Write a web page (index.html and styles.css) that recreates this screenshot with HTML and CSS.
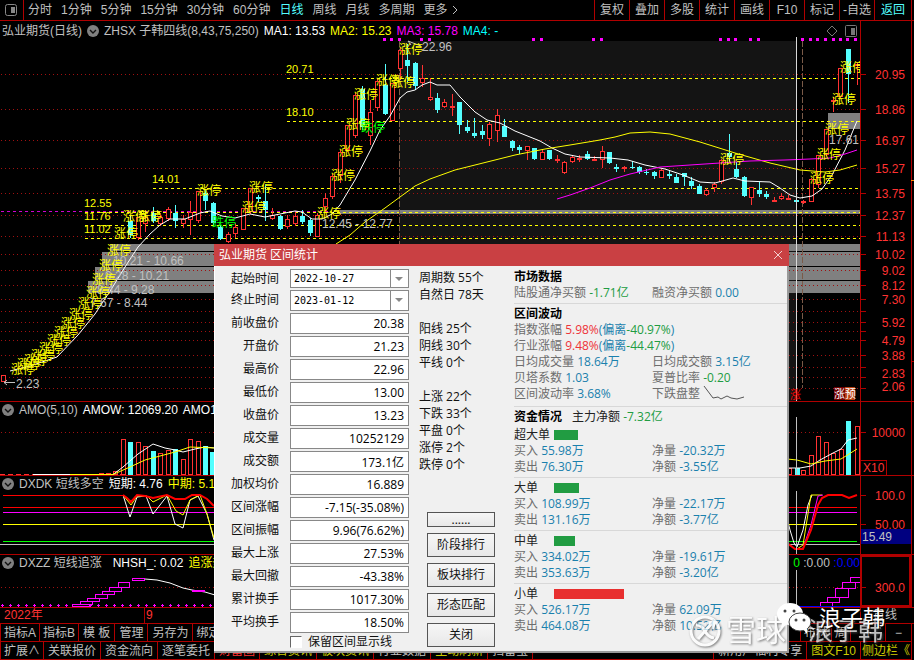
FILE: index.html
```
<!DOCTYPE html>
<html lang="zh-CN">
<head>
<meta charset="UTF-8" />
<title>弘业期货 区间统计</title>
<link rel="stylesheet" href="styles.css">
</head>
<body>
<!-- 顶部工具栏 -->
<div class="toolbar">
	<button class="layout" aria-label="布局"><svg width="12" height="12" viewBox="0 0 12 12"><rect x="0.5" y="0.5" width="11" height="11" rx="2" fill="none" stroke="#888"/><rect x="6" y="3" width="4" height="6" fill="#888"/></svg></button>
	<div class="periods">
		<button>分时</button>
		<button>1分钟</button>
		<button>5分钟</button>
		<button>15分钟</button>
		<button>30分钟</button>
		<button>60分钟</button>
		<button class="on">日线</button>
		<button>周线</button>
		<button>月线</button>
		<button>多周期</button>
		<button>更多 <svg width="6" height="10" viewBox="0 0 6 10"><path d="M1 1L5 5L1 9" fill="none" stroke="#c0c0c0"/></svg></button>
	</div>
	<div class="tools">
		<button>复权</button>
		<button>叠加</button>
		<button>多股</button>
		<button>统计</button>
		<button>画线</button>
		<button>F10</button>
		<button>标记</button>
		<button>-自选</button>
		<button class="on">返回</button>
	</div>
</div>

<!-- K线 -->
<div class="panel">
	<div class="title main">
		<span>弘业期货(日线)</span>
		<svg class="fold" width="12" height="12" viewBox="0 0 12 12"><circle cx="6" cy="6" r="6" fill="#808080"/><path d="M3 5L6 8L9 5" fill="none" stroke="#111" stroke-width="1.4"/></svg>
		<span>ZHSX 子韩四线(8,43,75,250)</span>
		<span class="white">MA1: 13.53</span>
		<span class="yellow">MA2: 15.23</span>
		<span class="magenta">MA3: 15.78</span>
		<span class="cyan">MA4: -</span>
		<svg class="right" width="31" height="12" viewBox="0 0 31 12"><path d="M6 1L11 6L6 11L1 6Z" fill="none" stroke="#777"/><rect x="19.500" y="0.500" width="11" height="11" rx="1" fill="none" stroke="#777"/><rect x="25" y="3" width="4" height="7" fill="#777"/></svg>
	</div>
	<svg class="plot" id="kline" viewBox="0 21 860 380"></svg>
	<svg class="axis" id="klineAxis" width="54" height="380" viewBox="860 21 54 380"></svg>
</div>
<!-- 成交额 -->
<div class="panel">
	<div class="title">
		<svg class="fold" width="12" height="12" viewBox="0 0 12 12"><circle cx="6" cy="6" r="6" fill="#808080"/><path d="M3 5L6 8L9 5" fill="none" stroke="#111" stroke-width="1.4"/></svg>
		<span>AMO(5,10)</span>
		<span class="white">AMOW: 12069.20</span>
		<span class="white">AMO1:</span>
	</div>
	<svg class="plot" id="amo" viewBox="0 402 860 73"></svg>
	<svg class="axis" id="amoAxis" width="54" height="73" viewBox="860 402 54 73"></svg>
</div>
<!-- 短线多空 -->
<div class="panel">
	<div class="title">
		<svg class="fold" width="12" height="12" viewBox="0 0 12 12"><circle cx="6" cy="6" r="6" fill="#808080"/><path d="M3 5L6 8L9 5" fill="none" stroke="#111" stroke-width="1.4"/></svg>
		<span>DXDK 短线多空</span>
		<span class="white">短期: 4.76</span>
		<span class="yellow">中期: 5.15</span>
	</div>
	<svg class="plot" id="dxdk" viewBox="0 476 860 78"></svg>
	<svg class="axis" id="dxdkAxis" width="54" height="78" viewBox="860 476 54 78"></svg>
</div>
<!-- 短线追涨 -->
<div class="panel">
	<div class="title">
		<svg class="fold" width="12" height="12" viewBox="0 0 12 12"><circle cx="6" cy="6" r="6" fill="#808080"/><path d="M3 5L6 8L9 5" fill="none" stroke="#111" stroke-width="1.4"/></svg>
		<span>DXZZ 短线追涨</span>
		<span class="white wide">NHSH_: 0.02</span>
		<span class="yellow">追涨热</span>
		<span class="tail"><span class="green">0</span> <span>:0.00</span> <span class="blue">:0.00</span></span>
	</div>
	<svg class="plot" id="dxzz" viewBox="0 555 860 52"></svg>
	<svg class="axis" id="dxzzAxis" width="54" height="52" viewBox="860 555 54 52"></svg>
</div>

<div class="dates">
	<span class="year">2022年</span>
	<span class="month">9</span>
	<span class="unit">日线</span>
</div>
<div class="tabs">
	<button>指标A</button>
	<button>指标B</button>
	<button class="roomy">模 板</button>
	<button class="roomy">管理</button>
	<button class="roomy">另存为</button>
	<button>绑定到</button>
	<button class="push">布林</button>
	<button>周</button>
	<button class="sq">+</button>
	<button class="last">−</button>
</div>
<div class="tabs second">
	<button>扩展∧</button>
	<button>关联报价</button>
	<button>资金流向</button>
	<button>逐笔委托</button>
	<button class="red">财富圈</button>
	<button class="yellow2">综合资讯</button>
	<button class="yellow2">板块资讯</button>
	<button>行业数据</button>
	<button class="yellow2">主动刷新</button>
	<button>扫雷宝</button>
	<button class="push">新用户福利专享</button>
	<button class="yellow2">图文F10</button>
	<button class="yellow2 last">侧边栏《</button>
</div>

<!-- 区间统计 -->
<div class="dialog" role="dialog" aria-label="弘业期货 区间统计">
	<div class="caption">
		<span>弘业期货 区间统计</span>
		<button aria-label="关闭窗口"><svg width="10" height="10" viewBox="0 0 10 10"><path d="M1 1L9 9M9 1L1 9" stroke="#f3d0d0" fill="none"/></svg></button>
	</div>
	<div class="content">
		<form class="fields">
			<label for="f1">起始时间</label><span class="date first"><select id="f1"><option>2022-10-27</option></select></span>
			<label for="f2">终止时间</label><span class="date"><select id="f2"><option>2023-01-12</option></select></span>
			<label for="f3">前收盘价</label><input id="f3" value="20.38" readonly>
			<label for="f4">开盘价</label><input id="f4" value="21.23" readonly>
			<label for="f5">最高价</label><input id="f5" value="22.96" readonly>
			<label for="f6">最低价</label><input id="f6" value="13.00" readonly>
			<label for="f7">收盘价</label><input id="f7" value="13.23" readonly>
			<label for="f8">成交量</label><input id="f8" value="10252129" readonly>
			<label for="f9">成交额</label><input id="f9" value="173.1亿" readonly>
			<label for="f10">加权均价</label><input id="f10" value="16.889" readonly>
			<label for="f11">区间涨幅</label><input id="f11" value="-7.15(-35.08%)" readonly>
			<label for="f12">区间振幅</label><input id="f12" value="9.96(76.62%)" readonly>
			<label for="f13">最大上涨</label><input id="f13" value="27.53%" readonly>
			<label for="f14">最大回撤</label><input id="f14" value="-43.38%" readonly>
			<label for="f15">累计换手</label><input id="f15" value="1017.30%" readonly>
			<label for="f16">平均换手</label><input id="f16" value="18.50%" readonly>
			<span class="keep"><input type="checkbox" id="keep"><label for="keep">保留区间显示线</label></span>
		</form>
		<div class="middle">
			<div class="counts">
				<p>周期数 55个</p>
				<p>自然日 78天</p>
				<p class="group">阳线 25个</p>
				<p>阴线 30个</p>
				<p>平线 0个</p>
				<p class="group">上涨 22个</p>
				<p>下跌 33个</p>
				<p>平盘 0个</p>
				<p>涨停 2个</p>
				<p>跌停 0个</p>
			</div>
			<div class="actions">
				<button class="more">......</button>
				<button>阶段排行</button>
				<button>板块排行</button>
				<button>形态匹配</button>
				<button>关闭</button>
			</div>
		</div>
		<div class="stats">
			<section>
				<h2>市场数据</h2>
				<div class="pair"><p>陆股通净买额 <b class="dn">-1.71亿</b></p><p>融资净买额 <b>0.00</b></p></div>
			</section>
			<section class="wave">
				<h2>区间波动</h2>
				<p>指数涨幅 <b class="up">5.98%</b><b>(偏离</b><b class="dn">-40.97%</b><b>)</b></p>
				<p>行业涨幅 <b class="up">9.48%</b><b>(偏离</b><b class="dn">-44.47%</b><b>)</b></p>
				<div class="pair"><p>日均成交量 <b>18.64万</b></p><p>日均成交额 <b>3.15亿</b></p></div>
				<div class="pair"><p>贝塔系数 <b>1.03</b></p><p>夏普比率 <b class="dn">-0.20</b></p></div>
				<div class="pair"><p>区间波动率 <b>3.68%</b></p><p>下跌盘整 <svg width="42" height="14" viewBox="0 0 42 14"><path d="M1 0L10 12L15 11L18 13L24 10L28 12L34 13L41 11" fill="none" stroke="#555"/></svg></p></div>
			</section>
			<section>
				<h2 class="money">资金情况 <span>主力净额 <b class="dn">-7.32亿</b></span></h2>
				<div class="order"><span>超大单</span><i class="sell" style="width:24px"></i></div>
				<div class="pair"><p>买入 <b>55.98万</b></p><p>净量 <b>-20.32万</b></p></div>
				<div class="pair"><p>卖出 <b>76.30万</b></p><p>净额 <b>-3.55亿</b></p></div>
			</section>
			<section>
				<div class="order"><span>大单</span><i class="sell" style="width:25px"></i></div>
				<div class="pair"><p>买入 <b>108.99万</b></p><p>净量 <b>-22.17万</b></p></div>
				<div class="pair"><p>卖出 <b>131.16万</b></p><p>净额 <b>-3.77亿</b></p></div>
			</section>
			<section>
				<div class="order"><span>中单</span><i class="sell" style="width:21px"></i></div>
				<div class="pair"><p>买入 <b>334.02万</b></p><p>净量 <b>-19.61万</b></p></div>
				<div class="pair"><p>卖出 <b>353.63万</b></p><p>净额 <b>-3.20亿</b></p></div>
			</section>
			<section>
				<div class="order"><span>小单</span><i class="buy" style="width:70px"></i></div>
				<div class="pair"><p>买入 <b>526.17万</b></p><p>净量 <b>62.09万</b></p></div>
				<div class="pair"><p>卖出 <b>464.08万</b></p><p>净额 <b>10.52亿</b></p></div>
			</section>
		</div>
	</div>
</div>

<!-- 水印 -->
<div class="mark xueqiu">
	<svg width="34" height="34" viewBox="0 0 34 34"><circle cx="17" cy="17" r="14" fill="none" stroke="#fff" stroke-width="3"/><path d="M8 11Q14 11 17 17T26 24M25 8L10 25M19 9L26 8L25 15" fill="none" stroke="#fff" stroke-width="3"/></svg>
	<span>雪球</span>
	<span class="name">浪子韩</span>
</div>
<div class="mark wechat">
	<svg width="36" height="32" viewBox="0 0 36 32"><ellipse cx="13" cy="11" rx="13" ry="11" fill="#fff"/><path d="M5 19L4 25L11 21Z" fill="#fff"/><circle cx="8" cy="8" r="1.500" fill="#444"/><circle cx="17" cy="8" r="1.500" fill="#444"/><ellipse cx="23" cy="19" rx="11" ry="9" fill="#fff" stroke="#444"/><path d="M26 26L30 31L30 25Z" fill="#fff"/><circle cx="19" cy="17" r="1.500" fill="#444"/><circle cx="27" cy="17" r="1.500" fill="#444"/></svg>
	<span>浪子韩</span>
</div>
<script src="chart.js"></script>
</body>
</html>
```
FILE: styles.css
```
* {
	padding: 0;
	margin: 0;
	box-sizing: border-box;
}
body {
	font: 12px/16px "Liberation Sans", "Noto Sans CJK SC", sans-serif;
	color: #c0c0c0;
	background-color: #000;
	min-height: 100vh;
	position: relative;
	overflow-x: hidden;
}
button {
	font: inherit;
	color: inherit;
	background: none;
	border: 0;
	white-space: nowrap;
}
svg {
	display: block;
}
.white { color: #fff; }
.yellow { color: #ff0; }
.magenta { color: #f0f; }
.cyan { color: #0ff; }
.green { color: #0f0; }
.blue { color: #00f; }
.red { color: #f33; }
.yellow2 { color: #cc0; }

/* 工具栏 */
.toolbar {
	display: flex;
	height: 21px;
	border-bottom: 1px solid #b00000;
}
.toolbar .on {
	color: #54ffff;
}
.layout {
	width: 24px;
	padding-left: 5px;
	border-right: 1px solid #b00000;
}
.periods {
	display: flex;
	gap: 9px;
	padding-left: 4px;
}
.periods button {
	display: flex;
	align-items: center;
	gap: 4px;
}
.tools {
	display: flex;
	margin-left: auto;
	margin-right: 2px;
	border-right: 1px solid #b00000;
}
.tools button {
	width: 35px;
	border-left: 1px solid #b00000;
}
.tools button:last-child {
	width: 37px;
}

/* 图表 */
.panel {
	display: grid;
	grid-template-columns: minmax(0, 1fr) 54px;
	border-bottom: 1px solid #b00000;
}
.title {
	grid-area: 1 / 1;
	align-self: start;
	z-index: 1;
	display: flex;
	align-items: center;
	gap: 5px;
	height: 16px;
	padding-left: 2px;
	overflow: hidden;
	white-space: nowrap;
}
.title.main {
	height: 19px;
}
.title .right {
	margin-left: auto;
	margin-right: 3px;
}
.title .wide {
	margin-left: 6px;
}
.title .tail {
	margin-left: auto;
	word-spacing: normal;
}
.fold {
	flex: none;
}
.plot {
	grid-area: 1 / 1;
	width: 100%;
}
.axis {
	grid-area: 1 / 2;
}
.plot text, .axis text {
	font-size: 12px;
}
.plot .small {
	font-size: 11px;
}
.plot rect, .plot line, .axis rect, .axis line {
	shape-rendering: crispEdges;
}

/* 底部 */
.dates {
	display: flex;
	height: 16px;
	line-height: 15px;
	color: #f33;
	border-bottom: 1px solid #b00000;
}
.dates .year {
	width: 144px;
	padding-left: 4px;
}
.dates .month {
	padding-left: 1px;
	border-left: 1px solid #b00000;
}
.dates .unit {
	margin-left: auto;
	width: 54px;
	padding-left: 12px;
	color: #c0c0c0;
	border-left: 1px solid #b00000;
}
.tabs {
	display: flex;
	height: 18px;
	margin-right: 2px;
	border: 1px solid #b00000;
	border-top: 0;
}
.tabs button {
	padding: 0 3px;
	line-height: 16px;
	border-right: 1px solid #b00000;
}
.tabs .roomy {
	padding: 0 4px;
}
.tabs .push {
	margin-left: auto;
	border-left: 1px solid #b00000;
}
.tabs .sq {
	width: 35px;
}
.tabs .last {
	min-width: 25px;
	padding: 0 1px;
	border-right: 0;
}
.tabs.second button:not(:first-child):not(.last) {
	padding: 0 4px;
}

/* 对话框 */
.dialog {
	position: absolute;
	left: 214px;
	top: 244px;
	width: 575px;
	z-index: 5;
	font-family: "Open Sans", "Noto Sans CJK SC", sans-serif;
	color: #111;
	background-color: #f0f0f0;
	border-bottom: 2px solid #999;
}
.caption {
	display: flex;
	justify-content: space-between;
	align-items: center;
	height: 22px;
	padding: 0 6px 0 5px;
	color: #fff;
	background-color: #c94043;
}
.content {
	display: grid;
	grid-template-columns: 195px 99px 1fr;
	height: 385px;
	border-left: 1px solid #fff;
	border-right: 2px solid #999;
}
.fields {
	display: grid;
	grid-template-columns: 64px 119px;
	column-gap: 11px;
	row-gap: 2px;
	align-content: start;
	padding-top: 3px;
}
.fields > label {
	text-align: right;
	line-height: 19px;
}
.fields > input {
	width: 100%;
	height: 21px;
	padding: 0 4px;
	font: inherit;
	text-align: right;
	background-color: #fff;
	border: 1px solid #888;
}
.date {
	position: relative;
	height: 21px;
}
.date.first {
	height: 19px;
}
.date select {
	display: block;
	width: 100%;
	height: 100%;
	padding-left: 3px;
	font: 10px "DejaVu Sans Mono", monospace;
	color: #000;
	background-color: #fff;
	border: 1px solid #888;
	border-radius: 0;
	appearance: none;
	-webkit-appearance: none;
}
.date:before {
	content: "";
	position: absolute;
	right: 18px;
	top: 1px;
	bottom: 1px;
	border-left: 1px solid #888;
}
.date:after {
	content: "";
	position: absolute;
	right: 6px;
	top: 8px;
	border: 4px solid transparent;
	border-top-color: #888;
	border-bottom: 0;
}
.keep {
	grid-column: 2;
	display: flex;
	align-items: center;
	gap: 6px;
	height: 14px;
	white-space: nowrap;
}
.keep input {
	width: 12px;
	height: 12px;
	background-color: #fff;
	border: 1px solid #fff;
	border-top-color: #666;
	border-left-color: #666;
	appearance: none;
	-webkit-appearance: none;
}
.middle {
	display: flex;
	flex-direction: column;
	justify-content: space-between;
	padding: 3px 14px 4px 9px;
}
.counts {
	line-height: 17px;
	white-space: nowrap;
}
.counts .group {
	margin-top: 17px;
}
.actions {
	display: flex;
	flex-direction: column;
	gap: 6px;
	width: 68px;
	margin-left: 8px;
}
.actions button {
	height: 24px;
	line-height: 20px;
	border: 1px solid #555;
	background: linear-gradient(#f6f6f6, #e8e8e8);
}
.actions .more {
	height: 15px;
	line-height: 12px;
}
.stats {
	color: #6d6d6d;
	white-space: nowrap;
	padding: 1px 0 0 5px;
}
.stats section {
	padding: 2px 0;
	border-bottom: 1px solid #d8d8d8;
}
.stats section:last-child {
	border-bottom: 0;
}
.stats .wave {
	padding-bottom: 4px;
}
.stats h2 {
	font-size: 12px;
	line-height: 16px;
	color: #000;
}
.stats b {
	font-weight: normal;
	color: #1a80ad;
}
.stats .up { color: #ee3338; }
.stats .dn { color: #219c42; }
.stats .money {
	display: flex;
	gap: 10px;
	margin-bottom: 2px;
}
.money span {
	font-weight: normal;
	color: #222;
}
.pair {
	display: grid;
	grid-template-columns: 138px 1fr;
}
.pair svg {
	display: inline-block;
	vertical-align: top;
}
.order {
	display: flex;
	align-items: center;
	color: #222;
}
.order span {
	width: 40px;
}
.order i {
	height: 10px;
}
.sell { background-color: #219c42; }
.buy { background-color: #e83030; }

/* 水印 */
.mark {
	position: absolute;
	z-index: 6;
	display: flex;
	align-items: center;
	color: #fff;
	white-space: nowrap;
	pointer-events: none;
}
.xueqiu {
	left: 688px;
	top: 614px;
	gap: 4px;
	opacity: 0.75;
	font-size: 30px;
	line-height: 34px;
	filter: drop-shadow(1px 1px 1px #555);
}
.xueqiu .name {
	margin-left: 18px;
	font-size: 25px;
}
.wechat {
	left: 777px;
	top: 603px;
	gap: 6px;
	font-size: 22px;
	line-height: 32px;
	text-shadow: 1px 1px 1px #000;
}
```
FILE: chart.js
```
var RED = '#ff3232', CYAN = '#54ffff', LINE = '#b00000';

// 中心x, 最高, 实体上沿, 实体下沿, 最低, 阳线=1 阴线=0
var candles = [
	[3,375,375,382,382,1],[130,215,221,235,238,0],[138,217,217,238,240,1],[145,213,217,224,232,1],
	[153,207,213,221,223,0],[160,215,217,224,226,1],[168,207,209,219,221,1],[175,205,213,221,228,0],
	[183,215,219,224,228,1],[190,201,212,220,235,1],[198,191,191,221,223,1],[205,189,193,201,210,0],
	[213,202,203,223,225,0],[220,225,227,239,240,0],[228,232,234,242,243,1],[235,223,227,234,238,1],
	[243,208,208,230,230,1],[250,188,188,212,214,1],[258,195,197,199,202,0],[265,184,201,210,221,0],
	[272,208,215,219,220,1],[280,215,216,229,230,0],[287,215,219,227,229,1],[295,212,216,224,226,1],
	[302,210,216,222,224,0],[310,218,220,233,236,0],[317,213,215,237,237,1],[325,193,198,207,212,1],
	[332,174,176,197,199,1],[340,150,152,176,183,1],[347,125,125,150,152,1],[355,93,95,136,138,1],
	[362,86,89,127,130,0],[370,100,112,136,145,1],[377,79,81,108,111,1],[385,64,85,114,115,0],
	[392,83,83,121,121,1],[400,48,50,69,80,1],[407,44,60,66,82,0],[415,62,63,86,90,0],
	[422,65,78,83,87,1],[430,78,97,100,101,1],[437,93,98,110,113,0],[444,99,102,107,108,1],
	[452,94,106,107,116,1],[459,102,102,125,134,0],[467,120,127,131,133,0],[474,118,133,136,138,0],
	[482,125,131,135,139,0],[489,122,124,139,146,1],[497,109,115,131,142,1],[504,119,126,137,137,0],
	[512,140,141,148,151,0],[519,145,147,150,154,0],[527,146,146,151,160,1],[534,148,148,159,160,0],
	[542,150,152,160,160,1],[549,150,150,159,160,0],[557,155,159,161,163,1],[564,161,162,173,174,1],
	[572,155,157,162,163,1],[579,155,158,159,162,1],[587,151,154,159,160,0],[594,156,159,160,161,1],
	[602,146,151,160,168,1],[609,152,152,163,164,0],[616,164,167,169,172,0],[624,166,167,169,172,1],
	[632,161,167,168,169,0],[639,166,167,172,174,0],[646,169,172,173,175,0],[654,171,172,176,179,0],
	[661,169,170,178,178,1],[669,171,174,176,179,0],[676,174,177,183,183,0],[684,173,173,177,186,0],
	[691,177,181,186,189,0],[699,184,186,194,194,0],[706,188,190,195,196,1],[714,182,184,188,192,1],
	[721,159,160,182,184,1],[729,134,153,157,163,0],[736,162,169,177,178,0],[744,176,177,196,197,0],
	[751,187,187,198,205,1],[759,182,190,194,197,0],[766,191,194,197,199,0],[774,197,200,201,201,1],
	[781,193,196,199,200,1],[788,195,198,199,200,1],[796,199,200,202,203,0],[803,200,201,202,204,1],
	[811,178,179,202,202,1],[818,155,155,185,188,1],[826,129,129,155,156,1],[833,97,100,101,112,1],
	[840,68,68,97,98,1],[848,49,49,74,103,0],[857,63,64,66,85,1]
];
var grids = [74,109,140,168,193,215,236,254,270,285,299,311,322,331,340,355,367,377,388];
var prices = [['20.95',74],['18.86',109],['16.97',140],['15.27',168],['13.75',193],['12.37',215],['11.13',236],
	['10.02',254],['9.02',270],['8.12',285],['7.30',299],['5.92',322],['4.79',340],['3.88',355],['2.83',373],['2.06',386]];
var levels = [['20.71',286,78,73],['18.10',286,121,116],['14.01',152,188,183],['12.55',84,212,207],['11.76',84,225,220],['11.02',84,238,233]];
var limits = [[11,370],[17,365],[24,361],[31,356],[39,349],[47,341],[54,333],[61,324],[69,315],[78,304],[86,293],
	[92,280],[99,266],[107,251],[114,234],[123,217],[138,217],[197,191],[242,208],[249,188],[317,214],[331,176],
	[339,152],[346,125],[354,95],[376,81],[391,83],[399,50],[720,160],[810,179],[817,155],[825,130],[832,100],[840,68]];
var dots = [384,391,399,421,429,533,541,593,601,720,728,735,750,758,802,810,817,825,833,840,847,855];

function rect(x, y, w, h, fill) {
	return '<rect x="' + x + '" y="' + y + '" width="' + w + '" height="' + h + '" fill="' + fill + '"/>';
}
function box(x, y, w, h, stroke) {
	return '<rect x="' + (x + 0.5) + '" y="' + (y + 0.5) + '" width="' + (w - 1) + '" height="' + Math.max(h - 1, 1) + '" fill="#000" stroke="' + stroke + '"/>';
}
function hline(x1, x2, y, color, dash) {
	return '<line x1="' + x1 + '" x2="' + x2 + '" y1="' + (y + 0.5) + '" y2="' + (y + 0.5) + '" stroke="' + color + '"' + (dash ? ' stroke-dasharray="' + dash + '"' : '') + '/>';
}
function vline(x, y1, y2, color, dash) {
	return '<line x1="' + (x + 0.5) + '" x2="' + (x + 0.5) + '" y1="' + y1 + '" y2="' + y2 + '" stroke="' + color + '"' + (dash ? ' stroke-dasharray="' + dash + '"' : '') + '/>';
}
function curve(points, color, width) {
	return '<polyline points="' + points + '" fill="none" stroke="' + color + '" stroke-width="' + (width || 1) + '"/>';
}
function text(x, y, s, fill, extra) {
	return '<text x="' + x + '" y="' + y + '" fill="' + fill + '" ' + (extra || '') + '>' + s + '</text>';
}
function bar(x, top, up) {
	return up ? box(x - 2, top, 5, 475 - top, RED) : rect(x - 2, top, 5, 475 - top, CYAN);
}
function put(id, s) {
	document.getElementById(id).innerHTML = s;
}
// 坐标轴竖线
function frame(y1, y2) {
	return vline(860, y1, y2, LINE) + vline(911, y1, y2, LINE);
}

// K线
var s = rect(399, 41, 398, 360, '#141414');
s += rect(110, 244, 750, 7, '#808080') + rect(102, 252, 758, 14, '#808080') + rect(95, 267, 765, 13, '#808080') + rect(88, 281, 772, 12, '#808080');
s += rect(340, 210, 520, 4, '#808080') + rect(828, 113, 32, 16, '#808080');
grids.forEach(function(y) { s += hline(1, 860, y, '#a01010', '1 3'); });
s += hline(1, 330, 211, '#d000d0', '3 3');
levels.forEach(function(l) {
	s += hline(l[1] + 1, 860, l[2], '#ff0', '3 3') + text(l[1], l[3], l[0], '#ff0', 'class="small"');
});
s += vline(399, 41, 401, '#7a5a48', '6 2') + vline(802, 41, 388, '#7a5a48', '6 2');
candles.forEach(function(c) {
	var color = c[5] ? RED : CYAN;
	s += vline(c[0], c[1], c[4], color);
	s += c[5] ? box(c[0] - 2, c[2], 5, c[3] - c[2], color) : rect(c[0] - 2, c[2], 5, c[3] - c[2], color);
});
s += curve('10,371 30,366 57,357 78,335 95,314 112,288 125,267 138,247 150,234 160,225 170,219 185,219 200,213 210,211 222,216 235,218 250,214 265,217 280,214 295,211 302,212 312,219 322,219 332,214 340,205 355,180 370,151 380,130 390,116 400,98 407,92 415,90 422,85 430,82 437,85 450,85 460,97 475,112 487,120 500,123 515,131 540,141 552,148 565,154 580,157 610,158 628,160 645,165 665,169 683,175 700,182 715,183 733,178 745,181 770,182 780,188 790,195 800,198 812,196 822,189 832,175 845,150 857,121', '#fff');
s += curve('336,244 350,235 365,222 385,208 400,197 415,186 430,179 455,170 487,162 515,155 545,149 570,145 600,140 615,137 630,133 650,132 670,134 700,142 735,153 770,163 800,170 825,172 840,170 857,165', '#ff0');
s += curve('557,199 570,195 590,188 610,180 630,174 660,167 690,165 720,163 750,161 785,160 810,159 830,158 845,154 857,150', '#f0f');
s += text(422, 51, '22.96', '#c0c0c0') + text(322, 228, '12.45 - 12.77', '#c0c0c0');
s += text(113, 265, '10.21 - 10.66', '#c0c0c0') + text(105, 280, '9.28 - 10.21', '#c0c0c0') + text(97, 294, '8.44 - 9.28', '#c0c0c0') + text(90, 307, '7.67 - 8.44', '#c0c0c0');
s += text(829, 144, '17.61', '#c0c0c0') + text(16, 388, '2.23', '#c0c0c0');
s += curve('15,382.500 4,382.500 7,380', '#c0c0c0') + curve('4,382.500 7,385', '#c0c0c0') + curve('421,46 413,43 408,41 411,45', '#c0c0c0');
limits.forEach(function(l) { s += text(l[0], l[1] + 4, '涨停', '#ff0'); });
s += text(212, 227, '跌停', '#0f0') + text(361, 132, '跌停', '#0f0');
dots.forEach(function(x) { s += rect(x - 1, 38, 3, 3, '#f0f'); });
s += vline(796, 37, 401, '#d8d8d8');
s += text(790, 399, '涨', '#f00', 'class="small"');
s += rect(834, 387, 11, 13, '#700000') + rect(845, 387, 10, 13, '#b84010') + text(834, 398, '涨预', '#fff', 'class="small"');
put('kline', s);

s = frame(21, 401);
grids.forEach(function(y) { s += hline(860, 866, y, LINE); });
prices.forEach(function(p) { s += text(905, p[1] + 5, p[0], RED, 'text-anchor="end"'); });
s += hline(911, 914, 180, '#f80') + hline(911, 914, 361, LINE);
put('klineAxis', s);

// 成交额
s = hline(1, 860, 432, '#a01010', '1 3') + hline(0, 123, 474, RED, '5 3');
[[101,473,1],[108,473,1],[115,471,1],[123,439,1],[130,442,0],[138,442,1],[145,446,1],[153,451,0],[160,453,1],[168,450,1],[175,449,0],[183,459,1],[190,439,1],[198,441,1],[205,446,0],[212,452,0],
[789,468,1],[797,468,0],[803,470,1],[811,455,1],[818,436,1],[826,442,1],[833,453,1],[841,449,1],[848,421,0],[857,426,1]].forEach(function(b) {
	s += bar(b[0], b[1], b[2]);
});
s += curve('33,474.500 113,474.500 123,467 138,454 153,444 165,448 175,450 183,452 195,449 205,447 215,448', '#fff');
s += curve('70,474.500 113,474.500 130,467 145,460 160,456 175,452 190,447 215,448', '#ff0');
s += curve('787,468 800,468 811,466 820,460 833,453 841,449 848,440 857,438', '#fff');
s += curve('787,459 797,460 811,464 825,461 841,459 857,449', '#ff0');
s += vline(796, 417, 475, '#c0c0c0');
put('amo', s);
put('amoAxis', frame(402, 475) + hline(860, 866, 432, LINE) + text(905, 437, '10000', RED, 'text-anchor="end"') + box(860, 460, 27, 16, LINE) + text(863, 472, 'X10', RED));

// 短线多空
s = hline(3, 857, 507, '#f00') + hline(3, 857, 512, '#f0f') + hline(3, 857, 524, '#ff0') + hline(3, 857, 541, '#0f0') + hline(0, 860, 544, '#c0c0c0');
s += curve('123,495 130,517 137,497 146,496 153,514 167,496 175,524 183,528 190,500 198,496 207,514 214,540', '#fff');
s += curve('123,495 131,505 137,496 147,496 153,502 167,495 176,511 183,515 190,500 200,495 207,514 214,538', '#ff0');
s += curve('3,495.500 123,495.500', '#f00');
s += curve('123,495 127,498 131,502 137,495 145,496 153,498 167,495 175,499 185,499 192,495 200,495 207,499 214,506', '#f00', 2);
s += curve('787,518 790,530 794,543 797,547 803,530 808,505 812,495', '#fff');
s += curve('797,549 803,545 807,520 811,495 822,495', '#ff0') + curve('803,548 811,525 818,496 823,495', '#f0f');
s += curve('787,543 795,549 803,549 811,530 818,505 822,498 828,495 842,495 849,498 857,495', '#f00', 2);
s += vline(796, 491, 554, '#c0c0c0');
put('dxdk', s);
put('dxdkAxis', frame(476, 554) + hline(860, 866, 495, LINE) + hline(860, 866, 524, LINE) + text(905, 500, '100.0', RED, 'text-anchor="end"') + text(905, 529, '50.00', RED, 'text-anchor="end"') + rect(861, 529, 50, 15, '#000080') + text(862, 541, '15.49', '#c0c0c0'));

// 短线追涨
s = hline(1, 860, 587, '#a01010', '1 3');
for(var x = 2; x < 787; x += 8) {
	s += rect(x - 1, 605, 3, 1, '#f0f') + rect(x, 604, 1, 3, '#f0f');
}
[[72,604,18,3],[80,601,13,4],[87,598,13,4],[95,594,13,5],[102,591,13,4],[109,587,13,5],[118,582,12,6],[132,578,13,3],
[820,602,13,5],[827,597,13,6],[835,588,14,10],[842,582,14,7],[850,577,14,6]].forEach(function(r) {
	s += box(r[0], r[1], r[2], r[3], '#f0f');
});
s += curve('145,579 157,580 170,583 183,588 192,590 205,592 215,595', '#fff') + rect(192, 590, 13, 2, '#f0f');
s += hline(787, 860, 606, '#00f') + vline(796, 570, 606, '#c0c0c0');
put('dxzz', s);
put('dxzzAxis', frame(555, 607) + '<rect x="861" y="556" width="49" height="50" fill="none" stroke="' + LINE + '" stroke-width="2"/>' + hline(860, 866, 587, LINE) + text(905, 592, '300.0', RED, 'text-anchor="end"'));
```
